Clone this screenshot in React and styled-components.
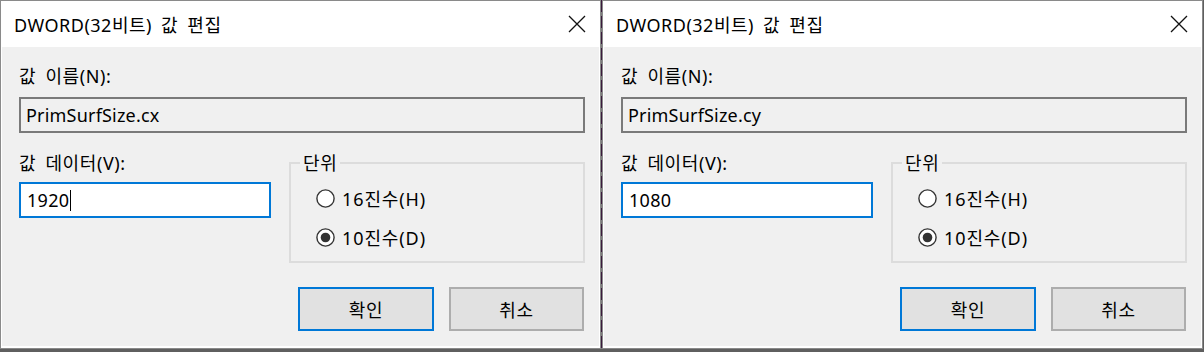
import React from 'react';
import styled, { createGlobalStyle } from 'styled-components';

const Global = createGlobalStyle`
  html, body { margin: 0; padding: 0; }
  body {
    background: #5f5f5f;
    font-family: 'Noto Sans', 'Noto Sans CJK KR', sans-serif;
    color: #000;
  }
  #root { width: 1204px; height: 352px; overflow: hidden; }
`;

const Desktop = styled.div`
  display: flex;
  align-items: flex-start;
  width: 1204px;
  height: 352px;
  background: #5f5f5f;
`;

const Separator = styled.div`
  width: 1px;
  height: 349px;
  background: repeating-linear-gradient(to bottom, #3a1a3c 0 12px, #7a7a7a 12px 16px);
`;

const Dialog = styled.section`
  box-sizing: border-box;
  width: 601px;
  height: 349px;
  border: 1px solid #8a8a8a;
  background: #fff;
  padding: 0 1px 2px 1px;
  display: flex;
  flex-direction: column;
  flex-shrink: 0;
`;

const TitleBar = styled.header`
  height: 46px;
  flex-shrink: 0;
  display: flex;
  align-items: center;
`;

const Title = styled.h1`
  flex: 1;
  margin: 0;
  padding-left: 12px;
  font-size: 18px;
  font-weight: 400;
  letter-spacing: 0.5px;
  word-spacing: 4px;
  color: #000;
`;

const CloseButton = styled.div`
  width: 45px;
  height: 46px;
  display: flex;
  align-items: center;
  justify-content: center;
`;

const Client = styled.div`
  flex: 1;
  background: #f0f0f0;
  padding: 18px 14px 0 17px;
  display: flex;
  flex-direction: column;
`;

const FieldLabel = styled.div`
  font-size: 18px;
  line-height: 22px;
  height: 22px;
  letter-spacing: 0.6px;
  word-spacing: 4px;
  white-space: nowrap;
`;

const NameBox = styled.div`
  margin-top: 10px;
  height: 36px;
  box-sizing: border-box;
  border: 2px solid #7a7a7a;
  padding: 0 5px;
  display: flex;
  align-items: center;
  font-size: 18px;
  letter-spacing: 0.2px;
`;

const DataRow = styled.div`
  margin-top: 19px;
  display: grid;
  grid-template-columns: 252px 296px;
  column-gap: 18px;
  align-items: start;
`;

const DataColumn = styled.div`
  display: flex;
  flex-direction: column;
`;

const DataInput = styled.div`
  margin-top: 8px;
  height: 36px;
  box-sizing: border-box;
  border: 2px solid #0078d7;
  background: #fff;
  padding: 0 6px;
  display: flex;
  align-items: center;
  font-size: 18px;
  letter-spacing: 0.3px;
`;

const Caret = styled.span`
  display: inline-block;
  width: 1px;
  height: 21px;
  margin-left: 1px;
  background: #000;
`;

const GroupBox = styled.fieldset`
  margin: 0;
  padding: 0 0 9px 0;
  min-width: 0;
  border: 2px solid #dcdcdc;
`;

const Legend = styled.legend`
  margin-left: 9px;
  padding: 0 3px;
  font-size: 18px;
  line-height: 22px;
  letter-spacing: 0.6px;
`;

const RadioList = styled.div`
  padding: 9px 0 0 25px;
  display: flex;
  flex-direction: column;
  gap: 9px;
`;

const RadioRow = styled.div`
  height: 30px;
  display: flex;
  align-items: center;
  gap: 7px;
  font-size: 18px;
  letter-spacing: 0.9px;
`;

const ButtonRow = styled.div`
  margin-top: 24px;
  padding-right: 1px;
  display: flex;
  justify-content: flex-end;
  gap: 15px;
`;

const Button = styled.div`
  width: ${p => (p.$primary ? 136 : 135)}px;
  height: 44px;
  box-sizing: border-box;
  background: #e1e1e1;
  border: 2px solid ${p => (p.$primary ? '#0078d7' : '#adadad')};
  display: flex;
  align-items: center;
  justify-content: center;
  font-size: 18px;
  letter-spacing: 0.6px;
`;

const CloseIcon = () => (
  <svg width="18" height="18" viewBox="0 0 18 18">
    <path d="M1 1 L17 17 M17 1 L1 17" stroke="#111" strokeWidth="1.3" fill="none" />
  </svg>
);

const RadioIcon = ({ checked }) => (
  <svg width="19" height="19" viewBox="0 0 19 19">
    <circle cx="9.5" cy="9.5" r="8.6" fill="#fff" stroke="#333" strokeWidth="1.4" />
    {checked && <circle cx="9.5" cy="9.5" r="4.8" fill="#333" />}
  </svg>
);

const EditDialog = ({ name, value, caret }) => (
  <Dialog>
    <TitleBar>
      <Title>DWORD(32비트) 값 편집</Title>
      <CloseButton>
        <CloseIcon />
      </CloseButton>
    </TitleBar>
    <Client>
      <FieldLabel>값 이름(N):</FieldLabel>
      <NameBox>{name}</NameBox>
      <DataRow>
        <DataColumn>
          <FieldLabel>값 데이터(V):</FieldLabel>
          <DataInput>
            {value}
            {caret && <Caret />}
          </DataInput>
        </DataColumn>
        <GroupBox>
          <Legend>단위</Legend>
          <RadioList>
            <RadioRow>
              <RadioIcon />
              16진수(H)
            </RadioRow>
            <RadioRow>
              <RadioIcon checked />
              10진수(D)
            </RadioRow>
          </RadioList>
        </GroupBox>
      </DataRow>
      <ButtonRow>
        <Button $primary>확인</Button>
        <Button>취소</Button>
      </ButtonRow>
    </Client>
  </Dialog>
);

export default function App() {
  return (
    <>
      <Global />
      <Desktop>
        <EditDialog name="PrimSurfSize.cx" value="1920" caret />
        <Separator />
        <EditDialog name="PrimSurfSize.cy" value="1080" />
      </Desktop>
    </>
  );
}
